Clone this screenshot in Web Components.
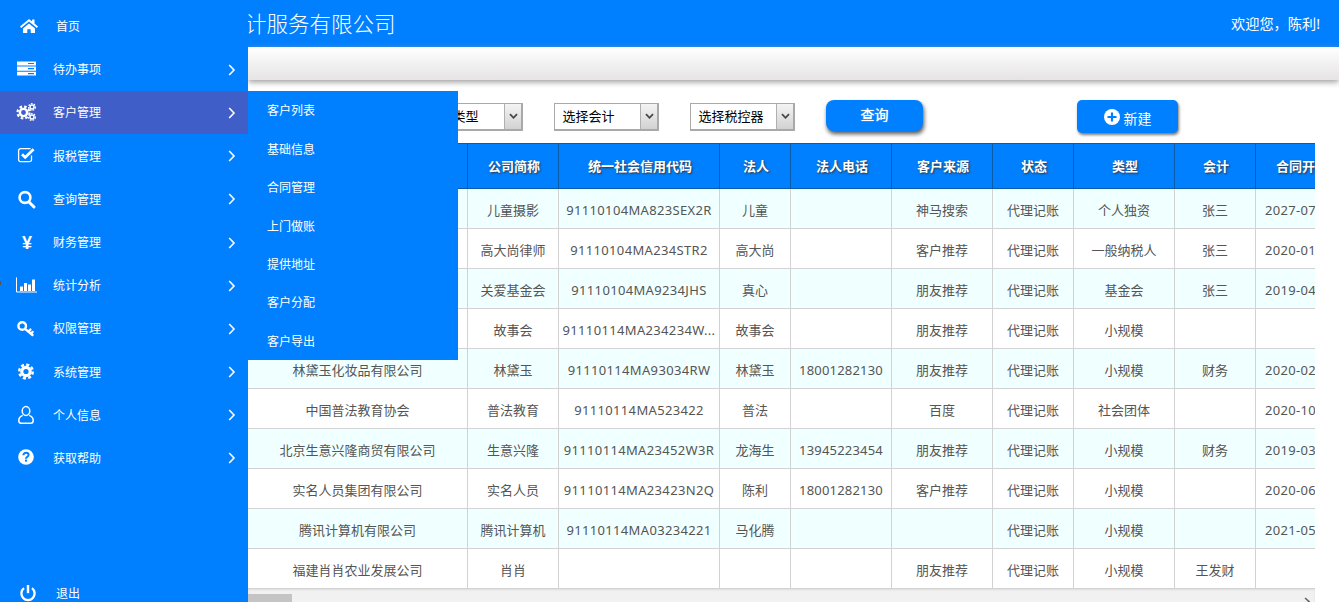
<!DOCTYPE html>
<html lang="zh">
<head>
<meta charset="utf-8">
<title>客户管理</title>
<style>
html,body{margin:0;height:100%;overflow:hidden;background:#fff}
body{font-family:"Noto Sans","Noto Sans CJK SC","Liberation Sans",sans-serif}
</style>
</head>
<body>
<app-shell>
  <side-menu slot="side"></side-menu>
  <top-bar slot="top" title-text="计服务有限公司" welcome="欢迎您，陈利!"></top-bar>
  <nav-strip slot="top"></nav-strip>
  <filter-bar slot="top"></filter-bar>
  <customer-table></customer-table>
  <fake-scrollbar></fake-scrollbar>
</app-shell>
<script>
const icons = {
  home: '<path d="M13 4 4 11.6l1.2 1.4L13 6.4l7.8 6.6L22 11.6 18.5 8.6V4.6h-2.4v2L13 4z"/><path d="M7 13.5 13 8.4l6 5.1V18h-4.3v-3.8h-3.4V18H7z"/>',
  server: '<path fill-rule="evenodd" d="M1 3.4h19v4.2H1zM1 8.6h19v4.2H1zM12 10h6v1.2h-6zM1 13.8h19v3.6H1zM12 15h6v1.2h-6zM12 5h6v1H12z"/>',
  cogs: '<g fill="none" stroke="#fff"><circle cx="7.5" cy="11.5" r="3.6" stroke-width="2.4"/><circle cx="7.5" cy="11.5" r="6" stroke-width="2.2" stroke-dasharray="2.6 2.1"/><circle cx="16" cy="6" r="2" stroke-width="1.5"/><circle cx="16" cy="6" r="3.4" stroke-width="1.3" stroke-dasharray="1.7 1.2"/><circle cx="16" cy="16" r="2" stroke-width="1.5"/><circle cx="16" cy="16" r="3.4" stroke-width="1.3" stroke-dasharray="1.7 1.2"/></g>',
  check: '<path fill="none" stroke="#fff" stroke-width="1.3" d="M15.5 11.5v4.2a2 2 0 0 1-2 2H4.6a2 2 0 0 1-2-2V6.6a2 2 0 0 1 2-2h10"/><path fill="none" stroke="#fff" stroke-width="2.8" d="M6 10.2l3.2 3.2 8.4-8.2"/>',
  search: '<circle cx="9" cy="10.5" r="5.4" fill="none" stroke="#fff" stroke-width="2.6"/><path d="M13 15l5 5" stroke="#fff" stroke-width="3" stroke-linecap="round"/>',
  chart: '<path fill="none" stroke="#fff" stroke-width="1" d="M.5 3.4V18h20.5"/><path d="M4 12.4h3v4.6H4zM8 9h3v8H8zM12 10.5h3v6.5h-3zM16 5.6h3V17h-3z"/>',
  key: '<circle cx="6.2" cy="9" r="3.8" fill="none" stroke="#fff" stroke-width="2.4"/><path fill="none" stroke="#fff" stroke-width="2.4" stroke-linecap="round" d="M9 11.8l7.5 6.2M12.4 14.6l2-2M15 16.8l1.6-1.8"/>',
  cog: '<g fill="none" stroke="#fff"><circle cx="10" cy="11.5" r="4.2" stroke-width="3.2"/><circle cx="10" cy="11.5" r="6.8" stroke-width="2.4" stroke-dasharray="3.1 2.24"/></g>',
  user: '<g fill="none" stroke="#fff" stroke-width="1.5"><ellipse cx="10" cy="8" rx="3.8" ry="4.4"/><path d="M6.8 12.4C4 13.4 2.8 15 2.8 17.4c0 1.8.8 2.8 2.4 2.8h9.6c1.6 0 2.4-1 2.4-2.8 0-2.4-1.2-4-4-5"/></g>',
  help: '<circle cx="10" cy="11" r="7.8"/><path fill="none" stroke="#007fff" stroke-width="2" d="M7.4 9.2c0-1.6 1.2-2.4 2.6-2.4s2.6.8 2.6 2.2c0 1.8-2.6 1.8-2.6 3.8"/><rect x="9" y="13.6" width="2" height="2" fill="#007fff"/>',
  power: '<path fill="none" stroke="#fff" stroke-width="2.3" d="M8 7.2a6.6 6.6 0 1 0 8 0"/><path stroke="#fff" stroke-width="2.4" d="M12 4v8.2"/>'
};

const shellTemplate = document.createElement('template');
shellTemplate.innerHTML = `
  <style>
    :host{display:flex;height:602px;width:1339px;overflow:hidden;color:#555}
    .side{flex:0 0 248px;position:relative;z-index:5}
    .main{flex:1;min-width:0;display:flex;flex-direction:column}
    .content{padding-right:24px}
  </style>
  <div class="side"><slot name="side"></slot></div>
  <div class="main">
    <slot name="top"></slot>
    <div class="content"><slot></slot></div>
  </div>`;
class AppShell extends HTMLElement {
  constructor() {
    super();
    this.attachShadow({ mode: 'open' });
    this.shadowRoot.append(shellTemplate.content.cloneNode(true));
  }
}
customElements.define('app-shell', AppShell);

class MenuItem extends HTMLElement {
  constructor() {
    super();
    this.attachShadow({ mode: 'open' });
  }
  connectedCallback() {
    const icon = this.getAttribute('icon');
    const glyph = icon === 'yen' ? '<span class="yen">¥</span>'
      : `<svg width="24" height="24" viewBox="0 0 24 24" fill="#fff">${icons[icon]}</svg>`;
    const arrow = this.hasAttribute('plain') ? '' :
      '<svg class="arrow" width="8" height="12" viewBox="0 0 8 12"><path d="M1.2 1l4.8 5-4.8 5" fill="none" stroke="#fff" stroke-width="1.6"/></svg>';
    this.shadowRoot.innerHTML = `
      <style>
        :host{display:block;flex:none;height:43.2px;position:relative;color:#fff;font-size:12px}
        :host([active]){background:linear-gradient(#3f5ec7,#3f5ec7) 0 0/100% 43px no-repeat}
        .row{display:flex;align-items:center;height:100%;padding-left:16px}
        svg{display:block;flex:none}
        .icon{width:24px;height:24px;flex:none;position:relative}
        .yen{display:block;width:22px;text-align:center;font:bold 18px/24px "Liberation Sans",sans-serif}
        .label{margin-left:13px;flex:1;line-height:16px;padding-top:1px}
        :host([plain]) .label{margin-left:16px}
        .arrow{margin-right:12px}
      </style>
      <div class="row">
        <div class="icon">${glyph}</div>
        <div class="label">${this.getAttribute('label')}</div>
        ${arrow}
      </div>
      <slot></slot>`;
  }
}
customElements.define('menu-item', MenuItem);

class FlyMenu extends HTMLElement {
  constructor() {
    super();
    this.attachShadow({ mode: 'open' });
    const items = ['客户列表', '基础信息', '合同管理', '上门做账', '提供地址', '客户分配', '客户导出'];
    this.shadowRoot.innerHTML = `
      <style>
        /* hangs over the page next to its menu row */
        :host{display:block;position:absolute;left:248px;top:0;width:210px;background:#007fff;color:#fff;font-size:12px}
        div{height:38.43px;line-height:39.5px;padding-left:19px;box-sizing:border-box}
      </style>
      ${items.map(t => `<div>${t}</div>`).join('')}`;
  }
}
customElements.define('fly-menu', FlyMenu);

const sideTemplate = document.createElement('template');
sideTemplate.innerHTML = `
  <style>
    :host{display:flex;flex-direction:column;height:602px;background:#007fff;padding-top:5px;box-sizing:border-box}
    .end{margin-top:91.4px}
    i{position:absolute;left:0;top:281px;width:1px;height:4px;background:#555}
  </style>
  <menu-item icon="home" label="首页" plain></menu-item>
  <menu-item icon="server" label="待办事项"></menu-item>
  <menu-item icon="cogs" label="客户管理" active><fly-menu></fly-menu></menu-item>
  <menu-item icon="check" label="报税管理"></menu-item>
  <menu-item icon="search" label="查询管理"></menu-item>
  <menu-item icon="yen" label="财务管理"></menu-item>
  <menu-item icon="chart" label="统计分析"></menu-item>
  <menu-item icon="key" label="权限管理"></menu-item>
  <menu-item icon="cog" label="系统管理"></menu-item>
  <menu-item icon="user" label="个人信息"></menu-item>
  <menu-item icon="help" label="获取帮助"></menu-item>
  <menu-item class="end" icon="power" label="退出" plain></menu-item>
  <i></i>`;
class SideMenu extends HTMLElement {
  constructor() {
    super();
    this.attachShadow({ mode: 'open' });
    this.shadowRoot.append(sideTemplate.content.cloneNode(true));
  }
}
customElements.define('side-menu', SideMenu);

class TopBar extends HTMLElement {
  constructor() {
    super();
    this.attachShadow({ mode: 'open' });
  }
  connectedCallback() {
    this.shadowRoot.innerHTML = `
      <style>
        :host{display:flex;flex:none;height:47px;align-items:center;justify-content:space-between;background:#007fff;color:#fff;overflow:hidden}
        .title{font-size:21.5px;margin-left:-3px;padding-bottom:2px;font-weight:300}
        .hello{font-size:14.2px;margin-right:19px;padding-bottom:2px}
      </style>
      <div class="title">${this.getAttribute('title-text')}</div>
      <div class="hello">${this.getAttribute('welcome')}</div>`;
  }
}
customElements.define('top-bar', TopBar);

class NavStrip extends HTMLElement {
  constructor() {
    super();
    this.attachShadow({ mode: 'open' });
    this.shadowRoot.innerHTML = `
      <style>
        :host{display:block;flex:none;height:33px;background:linear-gradient(#fff,#e6e4e4);box-shadow:0 2px 6px #9a9a9a}
      </style>`;
  }
}
customElements.define('nav-strip', NavStrip);

class FilterSelect extends HTMLElement {
  constructor() {
    super();
    this.attachShadow({ mode: 'open' });
    this.shadowRoot.innerHTML = `
      <style>
        :host{display:flex;width:105px;height:28px;box-sizing:border-box;border:1px solid #a9a9a9;border-right-width:2px;border-bottom-width:2px;background:#fff;color:#000;font-size:13px;line-height:25px;margin-top:3px}
        .txt{flex:1;padding-left:7.5px;white-space:nowrap}
        .btn{flex:0 0 16px;border-left:1px solid #b0b0b0;background:linear-gradient(#f4f4f4,#d2d2d2);display:flex;align-items:center;justify-content:center}
      </style>
      <div class="txt"><slot></slot></div>
      <div class="btn"><svg width="9" height="7" viewBox="0 0 9 7"><path d="M1 1.2l3.5 3.6L8 1.2" fill="none" stroke="#444" stroke-width="1.7"/></svg></div>`;
  }
}
customElements.define('filter-select', FilterSelect);

class ActionButton extends HTMLElement {
  constructor() {
    super();
    this.attachShadow({ mode: 'open' });
    this.shadowRoot.innerHTML = `
      <style>
        :host{display:flex;align-items:center;justify-content:center;gap:4px;box-sizing:border-box;background:#007fff;color:#fff;border-radius:5px;box-shadow:1px 2px 3px #777;font-size:14px}
      </style>
      <slot></slot>`;
  }
}
customElements.define('action-button', ActionButton);

class FilterBar extends HTMLElement {
  constructor() {
    super();
    this.attachShadow({ mode: 'open' });
    this.shadowRoot.innerHTML = `
      <style>
        :host{display:flex;flex:none;height:43px;padding:20px 0 0 170px;gap:31px;align-items:flex-start}
        .search{width:97px;height:31px;padding-bottom:3px;border-radius:8px;box-shadow:1px 3px 4px #555;text-shadow:0 0 1px #fff}
        .add{width:101px;height:33px;margin-left:123px;padding-top:1px}
        .add span{padding-top:1px}
        svg{display:block}
      </style>
      <filter-select>选择类型</filter-select>
      <filter-select>选择会计</filter-select>
      <filter-select>选择税控器</filter-select>
      <action-button class="search">查询</action-button>
      <action-button class="add">
        <svg width="16" height="16" viewBox="0 0 16 16"><circle cx="8" cy="8" r="8" fill="#fff"/><path d="M8 3.5v9M3.5 8h9" stroke="#007fff" stroke-width="2.2"/></svg>
        <span>新建</span>
      </action-button>`;
  }
}
customElements.define('filter-bar', FilterBar);

const tableColumns = [
  ['', 220], ['公司简称', 91], ['统一社会信用代码', 161], ['法人', 71], ['法人电话', 101],
  ['客户来源', 101], ['状态', 81], ['类型', 101], ['会计', 81], ['合同开', 59]
];
const tableRows = [
  ['', '儿童摄影', '91110104MA823SEX2R', '儿童', '', '神马搜索', '代理记账', '个人独资', '张三', '2027-07'],
  ['', '高大尚律师', '91110104MA234STR2', '高大尚', '', '客户推荐', '代理记账', '一般纳税人', '张三', '2020-01'],
  ['', '关爱基金会', '91110104MA9234JHS', '真心', '', '朋友推荐', '代理记账', '基金会', '张三', '2019-04'],
  ['', '故事会', '91110114MA234234W...', '故事会', '', '朋友推荐', '代理记账', '小规模', '', ''],
  ['林黛玉化妆品有限公司', '林黛玉', '91110114MA93034RW', '林黛玉', '18001282130', '朋友推荐', '代理记账', '小规模', '财务', '2020-02'],
  ['中国普法教育协会', '普法教育', '91110114MA523422', '普法', '', '百度', '代理记账', '社会团体', '', '2020-10'],
  ['北京生意兴隆商贸有限公司', '生意兴隆', '91110114MA23452W3R', '龙海生', '13945223454', '朋友推荐', '代理记账', '小规模', '财务', '2019-03'],
  ['实名人员集团有限公司', '实名人员', '91110114MA23423N2Q', '陈利', '18001282130', '客户推荐', '代理记账', '小规模', '', '2020-06'],
  ['腾讯计算机有限公司', '腾讯计算机', '91110114MA03234221', '马化腾', '', '', '代理记账', '小规模', '', '2021-05'],
  ['福建肖肖农业发展公司', '肖肖', '', '', '', '朋友推荐', '代理记账', '小规模', '王发财', '']
];
class CustomerTable extends HTMLElement {
  constructor() {
    super();
    this.attachShadow({ mode: 'open' });
    const cols = tableColumns.map(c => `<col style="width:${c[1]}px">`).join('');
    const head = tableColumns.map(c => `<th>${c[0]}</th>`).join('');
    const body = tableRows.map(r => `<tr>${r.map(v => `<td>${v}</td>`).join('')}</tr>`).join('');
    this.shadowRoot.innerHTML = `
      <style>
        :host{display:block;overflow:hidden;font-size:13px;color:#555}
        table{border-collapse:separate;border-spacing:0;table-layout:fixed;width:1067px}
        th{padding:0 0 2px 2px;background:#007fff;color:#fff;font-weight:bold;text-shadow:1px 1px 2px #333;border-top:1px solid #0a5ca8;border-bottom:1px solid #0a5ca8;border-right:1px solid #0a5ca8;box-sizing:border-box;height:46px}
        td{height:40px;box-sizing:border-box;padding:2px 0 0;text-align:center;white-space:nowrap;overflow:hidden;border-right:1px solid #d2d2d2;border-bottom:1px solid #d2d2d2}
        td:nth-child(3){letter-spacing:.34px}
        td:nth-child(5){letter-spacing:.2px}
        tbody tr:nth-child(odd) td{background:#f0ffff}
        th:last-child,td:last-child{border-right:0;text-align:left;padding-left:9px}
        td:last-child{letter-spacing:.3px}
        th:last-child{padding-left:20px}
      </style>
      <table><colgroup>${cols}</colgroup><thead><tr>${head}</tr></thead><tbody>${body}</tbody></table>`;
  }
}
customElements.define('customer-table', CustomerTable);

class FakeScrollbar extends HTMLElement {
  constructor() {
    super();
    this.attachShadow({ mode: 'open' });
    this.shadowRoot.innerHTML = `
      <style>
        :host{display:flex;height:17px;background:#f1f1f1;box-shadow:inset 0 1px 2px #ddd;padding-top:5px;box-sizing:border-box;justify-content:space-between}
        .thumb{width:44px;height:12px;background:#c4c4c4}
        svg{margin:3px 4px 0 0}
      </style>
      <div class="thumb"></div>
      <svg width="7" height="9" viewBox="0 0 7 9"><path d="M1 1l4 3.5L1 8" fill="none" stroke="#666" stroke-width="1.6"/></svg>`;
  }
}
customElements.define('fake-scrollbar', FakeScrollbar);
</script>
</body>
</html>
